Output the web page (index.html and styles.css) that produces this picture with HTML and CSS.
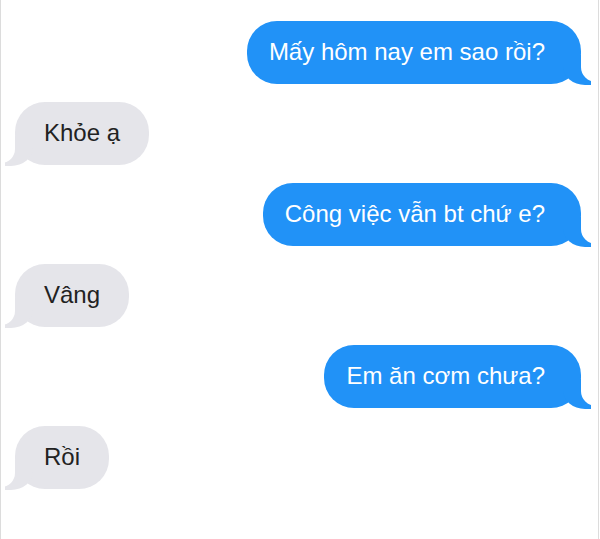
FILE: index.html
```html
<!DOCTYPE html>
<html lang="vi">
<head>
    <meta charset="UTF-8">
    <meta name="viewport" content="width=device-width, initial-scale=1.0">
    <title>Tin nhắn</title>
    <link rel="stylesheet" href="styles.css">
</head>
<body>

<div class="chat">
    <!-- Messages -->
    <p class="msg from-me">Mấy hôm nay em sao rồi?</p>
    <p class="msg from-them">Khỏe ạ</p>
    <p class="msg from-me">Công việc vẫn bt chứ e?</p>
    <p class="msg from-them">Vâng</p>
    <p class="msg from-me">Em ăn cơm chưa?</p>
    <p class="msg from-them">Rồi</p>
</div>

</body>
</html>
```

FILE: styles.css
```css
body {
    margin: 0;
    background-color: #fff;
    font-family: "Liberation Sans", Arial, sans-serif;
}

/* Chat container */
.chat {
    box-sizing: border-box;
    width: 599px;
    min-height: 539px;
    display: flex;
    flex-direction: column;
    gap: 18px;
    padding: 21px 17px 20px 14px;
    border-left: 1px solid #dcdcdc;
    border-right: 1px solid #dcdcdc;
    background-color: #fff;
}

/* Bubble */
.msg {
    position: relative;
    margin: 0;
    max-width: 75%;
    font-size: 24px;
    line-height: 30px;
    border-radius: 30px;
}

.msg::before,
.msg::after {
    content: "";
    position: absolute;
    bottom: -1px;
    height: 30px;
}

/* Sent messages */
.from-me {
    align-self: flex-end;
    padding: 16px 36px 17px 22px;
    background-color: #2192f7;
    color: #fff;
}

.from-me::before {
    right: -10px;
    border-right: 28px solid #2192f7;
    border-bottom-left-radius: 22px 19px;
}

.from-me::after {
    right: -16px;
    bottom: 2px;
    width: 16px;
    background-color: #fff;
    border-bottom-left-radius: 15px;
}

/* Received messages */
.from-them {
    align-self: flex-start;
    padding: 16px 29px 17px 29px;
    background-color: #e5e5ea;
    color: #222;
}

.from-them::before {
    left: -10px;
    border-left: 28px solid #e5e5ea;
    border-bottom-right-radius: 22px 19px;
}

.from-them::after {
    left: -14px;
    bottom: 2px;
    width: 14px;
    background-color: #fff;
    border-bottom-right-radius: 14px;
}
```
